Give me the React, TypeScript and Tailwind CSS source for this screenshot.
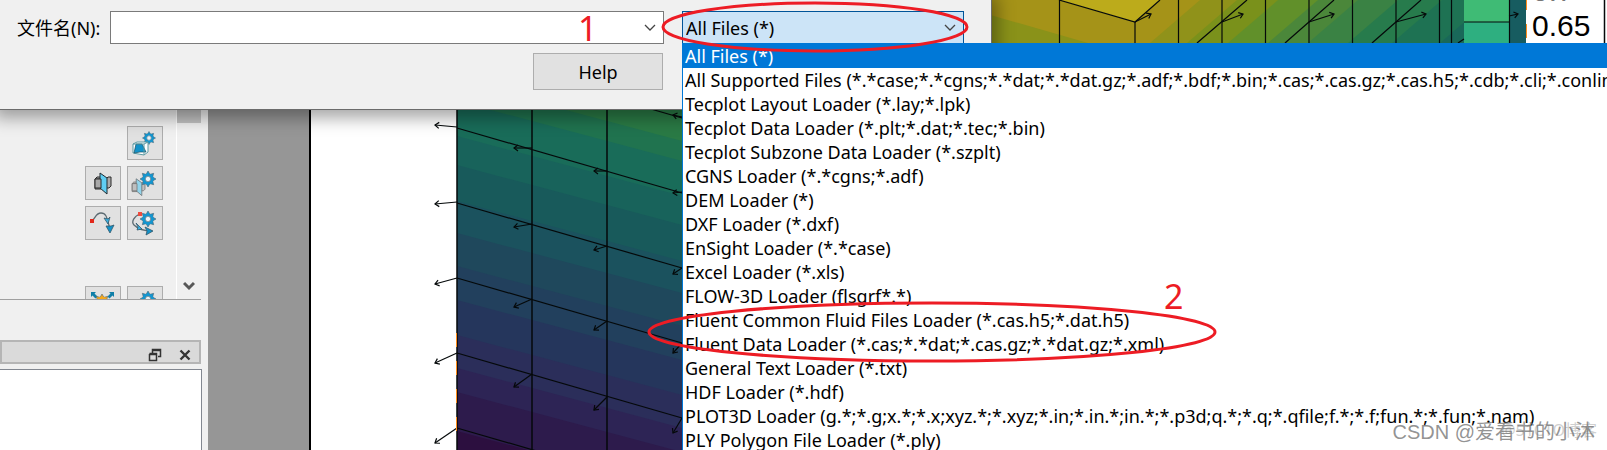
import { useState } from 'react';

const FILTERS = [
  'All Files (*)',
  'All Supported Files (*.*case;*.*cgns;*.*dat;*.*dat.gz;*.adf;*.bdf;*.bin;*.cas;*.cas.gz;*.cas.h5;*.cdb;*.cli;*.conlim;*.dat;*.dat.gz)',
  'Tecplot Layout Loader (*.lay;*.lpk)',
  'Tecplot Data Loader (*.plt;*.dat;*.tec;*.bin)',
  'Tecplot Subzone Data Loader (*.szplt)',
  'CGNS Loader (*.*cgns;*.adf)',
  'DEM Loader (*)',
  'DXF Loader (*.dxf)',
  'EnSight Loader (*.*case)',
  'Excel Loader (*.xls)',
  'FLOW-3D Loader (flsgrf*.*)',
  'Fluent Common Fluid Files Loader (*.cas.h5;*.dat.h5)',
  'Fluent Data Loader (*.cas;*.*dat;*.cas.gz;*.*dat.gz;*.xml)',
  'General Text Loader (*.txt)',
  'HDF Loader (*.hdf)',
  'PLOT3D Loader (g.*;*.g;x.*;*.x;xyz.*;*.xyz;*.in;*.in.*;in.*;*.p3d;q.*;*.q;*.qfile;f.*;*.f;fun.*;*.fun;*.nam)',
  'PLY Polygon File Loader (*.ply)',
];

// contour bands of the front face: y of the upper edge at x=457, colour
const FRONT_BANDS: [number, string][] = [
  [81, '#20734f'],
  [101, '#196c59'],
  [136, '#18635b'],
  [165, '#185a5b'],
  [201, '#1b525e'],
  [233, '#1f485c'],
  [266, '#22405d'],
  [300, '#25365c'],
  [335, '#2b2e5a'],
  [368, '#2d2455'],
  [392, '#2d1b4c'],
  [431, '#2c0f3f'],
];

// contour bands of the side face: x of the left edge at y=43, colour
const SIDE_BANDS: [number, string][] = [
  [1150, '#90921a'],
  [1187, '#7a911b'],
  [1228, '#61902a'],
  [1268, '#4b873a'],
  [1308, '#3a8244'],
  [1348, '#277b4c'],
  [1392, '#1e7253'],
  [1440, '#196859'],
];

function Gear({ x, y, s = 1, color = '#1496d0' }: { x: number; y: number; s?: number; color?: string }) {
  return (
    <g transform={`translate(${x} ${y}) scale(${s})`}>
      {[0, 45, 90, 135, 180, 225, 270, 315].map((a) => (
        <path key={a} d="M-2 -4.5L0 -8L2 -4.5Z" fill={color} stroke="#4d6470" strokeWidth=".6" transform={`rotate(${a})`} />
      ))}
      <circle r="4.2" fill="#e9f3f7" stroke={color} strokeWidth="2.6" />
      <circle r="2.7" fill="none" stroke="#4d6470" strokeWidth=".6" />
    </g>
  );
}

function SliceShape() {
  return (
    <g>
      <path d="M9 12l2-2h6v9l-2 3H9zM20 12l2-2h3v9l-2 2h-3z" fill="#a9a9a9" stroke="#2b2b2b" />
      <path d="M9 12h6v10M15 12l2-2" fill="none" stroke="#2b2b2b" />
      <path d="M14 6l7 5v16l-7-6z" fill="#5fcdf2" stroke="#1f2a30" />
      <path d="M9 12h6v9H9z" fill="#a9a9a9" stroke="#2b2b2b" />
    </g>
  );
}

function ToolIcon({ name }: { name: string }) {
  return (
    <svg width="34" height="32" viewBox="0 0 34 32" aria-hidden="true">
      {name === 'isoSettings' && (
        <g>
          <Gear x={21} y={11} s={0.82} />
          <path d="M5 17l4-2h11v10l-4 3-11-2z" fill="#fff" stroke="#5d9aa3" />
          <path d="M8 17h6l4 8h-6l-6 1z" fill="#1292c9" stroke="#134d63" strokeWidth=".7" />
          <path d="M5 17h11v11M16 17l4-2" fill="none" stroke="#5d9aa3" />
        </g>
      )}
      {name === 'slice' && <SliceShape />}
      {name === 'sliceSettings' && (
        <g>
          <g opacity=".6" transform="translate(-3 7) scale(.8)">
            <SliceShape />
          </g>
          <Gear x={20} y={12} />
        </g>
      )}
      {name === 'stream' && (
        <g>
          <path d="M6 14C10 10 10 6 15 6c6 0 6 6 9 16" fill="none" stroke="#5c6b72" strokeWidth="1.3" />
          <rect x="4" y="12" width="4" height="4" fill="#e2281b" />
          <path d="M18 11l4 6 2-7-2 2z" fill="#39b0e0" stroke="#35586a" strokeWidth=".8" />
          <path d="M20 19l4 7 4-8-3 1z" fill="#1292c9" stroke="#35586a" strokeWidth=".8" />
        </g>
      )}
      {name === 'streamSettings' && (
        <g>
          <path d="M12 7C6 9 3 15 6 18c4 4 10 6 18 6" fill="none" stroke="#5c6b72" strokeWidth="1.3" />
          <rect x="10" y="5" width="4" height="4" fill="#ee4b3e" />
          <path d="M8 16l6 6-5 1 1-3z" fill="#39b0e0" stroke="#35586a" strokeWidth=".8" />
          <path d="M17 20l8 4-7 4 1-4z" fill="#1292c9" stroke="#35586a" strokeWidth=".8" />
          <Gear x={20} y={12} />
        </g>
      )}
      {name === 'light' && (
        <g>
          <path d="M5 5h5l-1.500 1.500 3 3-2 2-3-3L5 10zM28 5h-5l1.500 1.500-3 3 2 2 3-3L28 10z" fill="#0f7fa8" />
          <Gear x={16} y={15} color="#f5a81c" />
        </g>
      )}
      {name === 'lightSettings' && <Gear x={20} y={12} />}
    </svg>
  );
}

function ToolButton({ name, label }: { name: string; label: string }) {
  return (
    <button type="button" aria-label={label} className="h-[34px] w-9 overflow-hidden border border-[#adadad] bg-[#e1e1e1]">
      <ToolIcon name={name} />
    </button>
  );
}

function Arrow({ x1, y1, x2, y2 }: { x1: number; y1: number; x2: number; y2: number }) {
  const angle = (Math.atan2(y2 - y1, x2 - x1) * 180) / Math.PI;
  return (
    <g>
      <path d={`M${x1} ${y1}L${x2} ${y2}`} />
      <path d="M-4 -3L0 0L-4 3" transform={`translate(${x2} ${y2}) rotate(${angle})`} />
    </g>
  );
}

function Plot() {
  return (
    <svg width="1296" height="450" viewBox="311 0 1296 450" className="block max-w-none" aria-label="Contour plot">
      <defs>
        <clipPath id="front">
          <path d="M457 0H1059L1135 22V450H457z" />
        </clipPath>
        <clipPath id="side">
          <path d="M1135 22L1160 0H1526V50H1135z" />
        </clipPath>
      </defs>

      <g clipPath="url(#front)">
        <rect x="457" y="0" width="700" height="450" fill="#2a7a45" />
        {FRONT_BANDS.map(([y, color]) => (
          <path key={color} d={`M457 ${y}L757 ${y + 80}V700H457z`} fill={color} />
        ))}
        <path d="M980 0H1140V50H980z" fill="#a59318" />
        <path d="M980 12L1088 43V50H980z" fill="#8a9219" />
      </g>
      <path d="M1059 0L1135 22L1160 0z" fill="#bcab1b" />
      <g clipPath="url(#side)">
        <rect x="1135" y="0" width="391" height="50" fill="#a59318" />
        {SIDE_BANDS.map(([x, color]) => (
          <path key={color} d={`M${x} 43L${x + 50} 0H1526V50H${x}z`} fill={color} />
        ))}
        <rect x="1509" y="0" width="17" height="50" fill="#175c60" />
      </g>
      <rect x="1464" y="0" width="45" height="22" fill="#3fbb75" />
      <rect x="1464" y="22" width="45" height="22" fill="#2eaf80" />

      <g fill="none" stroke="#05090a" strokeWidth="1.200">
        <path d="M457 100V450M532 100V450M607 100V450" strokeWidth="1.500" />
        {[53, 128, 203, 278, 353, 428].map((y) => (
          <path key={y} d={`M457 ${y}L682 ${y + 65}`} />
        ))}
        <Arrow x1={457} y1={127} x2={435} y2={125} />
        <Arrow x1={532} y1={148} x2={514} y2={148} />
        <Arrow x1={607} y1={171} x2={594} y2={171} />
        <Arrow x1={682} y1={192} x2={673} y2={193} />
        <Arrow x1={682} y1={117} x2={673} y2={115} />
        <Arrow x1={457} y1={202} x2={435} y2={204} />
        <Arrow x1={532} y1={224} x2={514} y2={227} />
        <Arrow x1={607} y1={246} x2={594} y2={250} />
        <Arrow x1={682} y1={268} x2={673} y2={274} />
        <Arrow x1={457} y1={278} x2={435} y2={284} />
        <Arrow x1={532} y1={299} x2={514} y2={307} />
        <Arrow x1={607} y1={321} x2={594} y2={330} />
        <Arrow x1={682} y1={343} x2={673} y2={353} />
        <Arrow x1={457} y1={353} x2={435} y2={363} />
        <Arrow x1={532} y1={374} x2={514} y2={387} />
        <Arrow x1={607} y1={397} x2={594} y2={410} />
        <Arrow x1={682} y1={418} x2={673} y2={433} />
        <Arrow x1={457} y1={428} x2={435} y2={443} />
        <path d="M1059.500 0V44M1135 22V44M1178.500 0V44M1222 0V44M1265.500 0V44M1309 0V44M1352.500 0V44M1396 0V44M1439.500 0V44M1451.500 0V44M1464 22H1509M1509.500 0V44" />
        <path d="M1059 0L1135 22L1160 0M1197 43L1247 0M1285 43L1334 0M1372 43L1421 0M1458 43L1464 39" />
        <Arrow x1={1135} y1={22} x2={1151} y2={14} />
        <Arrow x1={1222} y1={22} x2={1243} y2={14} />
        <Arrow x1={1309} y1={22} x2={1334} y2={14} />
        <Arrow x1={1396} y1={22} x2={1426} y2={14} />
        <Arrow x1={1509} y1={16} x2={1518} y2={14} />
        <path d="M1604.500 0V44" strokeWidth="1.500" />
      </g>
      <path d="M456.500 333V440M1526.500 0V10M1526.500 24V40" fill="none" stroke="#ff8c1a" strokeDasharray="14 14" />
      <text x="1532" y="36" fontSize="30" fontFamily="Liberation Sans, sans-serif">0.65</text>
      <text x="1532" y="1" fontSize="30" fill="#777" fontFamily="Liberation Sans, sans-serif">0.7</text>
    </svg>
  );
}

function Sidebar() {
  return (
    <aside className="flex w-[208px] shrink-0 flex-col bg-[#f0f0f0]">
      <div className="mr-[7px] flex h-[300px] shrink-0 overflow-hidden border-b border-[#a0a0a0]">
        <div className="flex flex-1 justify-end overflow-hidden border-r border-white pr-[13px] pt-[126px]">
          <div className="grid auto-rows-[34px] grid-cols-[36px_36px] gap-1.5">
            <span />
            <ToolButton name="isoSettings" label="Iso-surface settings" />
            <ToolButton name="slice" label="Slice" />
            <ToolButton name="sliceSettings" label="Slice settings" />
            <ToolButton name="stream" label="Streamtrace" />
            <ToolButton name="streamSettings" label="Streamtrace settings" />
            <span className="col-span-2" />
            <ToolButton name="light" label="Lighting" />
            <ToolButton name="lightSettings" label="Lighting settings" />
          </div>
        </div>
        <div className="flex w-6 flex-col items-center justify-between">
          <div className="h-[123px] w-full bg-[#c1c1c1]" />
          <button type="button" aria-label="Scroll down" className="mb-1.5">
            <svg width="12" height="12" viewBox="0 0 12 12">
              <path d="M1 2L6 7L11 2" fill="none" stroke="#585858" strokeWidth="3" />
            </svg>
          </button>
        </div>
      </div>

      <div className="mr-[7px] mt-10 flex h-6 shrink-0 items-center justify-end gap-[17px] border-2 border-[#b5b5b5] bg-[#dadada] pr-2 pt-1.5">
        <button type="button" aria-label="Float">
          <svg width="14" height="14" viewBox="0 0 14 14" fill="none" stroke="#333" className="block">
            <path d="M4.500 5V1.500H12.500V8.500H10M4 2.500H13" strokeWidth="1.500" />
            <path d="M1.500 6V12.500H8.500V5.500H1.500M1 6.500H9" strokeWidth="1.500" />
          </svg>
        </button>
        <button type="button" aria-label="Close">
          <svg width="12" height="12" viewBox="0 0 12 12" fill="none" stroke="#333" className="block">
            <path d="M1.500 1.500L10.500 10.500M10.500 1.500L1.500 10.500" strokeWidth="2.400" />
          </svg>
        </button>
      </div>
      <div className="mr-1.5 mt-[5px] flex-1 border-r border-t border-[#828790] bg-white" />
    </aside>
  );
}

function Chevron() {
  return (
    <svg width="12" height="8" viewBox="0 0 12 8" fill="none" stroke="#444" aria-hidden="true">
      <path d="M1 1L6 6L11 1" strokeWidth="1.300" />
    </svg>
  );
}

export default function App() {
  const [fileName, setFileName] = useState('');
  const [filter, setFilter] = useState(FILTERS[0]);

  return (
    <div className="relative h-screen overflow-hidden bg-white font-['Noto_Sans','Noto_Sans_CJK_SC',sans-serif] text-lg leading-6 text-black">
      <main className="flex h-full">
        <Sidebar />
        <div className="w-[103px] shrink-0 border-r-2 border-black bg-[#969696]" />
        <div className="min-w-0 flex-1 overflow-hidden">
          <Plot />
        </div>
      </main>

      {/* file dialog */}
      <form
        onSubmit={(e) => e.preventDefault()}
        className="absolute left-0 top-0 flex h-[110px] w-[992px] items-start border-b border-r border-[#6b6b6b] bg-[#f0f0f0] pl-[17px] pt-[11px] shadow-[0_2px_16px_6px_rgba(0,0,0,0.35)]"
      >
        <div className="flex w-[647px] flex-col items-end gap-[9px]">
          <div className="flex w-full items-center">
            <label htmlFor="file-name" className="w-[93px] shrink-0 whitespace-nowrap">
              文件名(N):
            </label>
            <div className="flex h-[33px] flex-1 items-center border border-[#7a7a7a] bg-white pr-[7px]">
              <input
                id="file-name"
                type="text"
                value={fileName}
                onChange={(e) => setFileName(e.target.value)}
                className="h-full min-w-0 flex-1 px-1 outline-none"
              />
              <button type="button" aria-label="Recent files">
                <Chevron />
              </button>
            </div>
          </div>
          <button type="button" className="mr-px h-[37px] w-[130px] border border-[#adadad] bg-[#e1e1e1]">
            Help
          </button>
        </div>
        <div className="ml-[18px] flex h-[33px] w-[282px] items-center border border-[#005499] bg-[#cce4f7] pr-[7px]">
          <select
            aria-label="File type"
            value={filter}
            onChange={(e) => setFilter(e.target.value)}
            className="h-full min-w-0 flex-1 appearance-none pl-[3px] outline-none"
          >
            {FILTERS.map((f) => (
              <option key={f}>{f}</option>
            ))}
          </select>
          <Chevron />
        </div>
      </form>

      {/* opened file type list */}
      <ul role="listbox" aria-label="File types" className="absolute bottom-0 left-[682px] right-0 top-[43px] overflow-hidden border-l border-t border-[#0078d7] bg-white">
        {FILTERS.map((f) => (
          <li
            key={f}
            role="option"
            aria-selected={f === filter}
            onClick={() => setFilter(f)}
            className="h-6 whitespace-nowrap pl-0.5 aria-selected:bg-[#0078d7] aria-selected:text-white"
          >
            {f}
          </li>
        ))}
      </ul>

      {/* red marks */}
      <svg className="pointer-events-none absolute left-0 top-0" width="1300" height="450" fill="none" stroke="#ed1c24" strokeWidth="3">
        <ellipse cx="815" cy="27" rx="152" ry="24" />
        <ellipse cx="932" cy="332" rx="283" ry="29" />
      </svg>
      <span className="absolute left-[578px] top-[10px] text-[34px] leading-9 text-[#ed1c24]">1</span>
      <span className="absolute left-[1164px] top-[278px] text-[34px] leading-9 text-[#ed1c24]">2</span>

      <span className="absolute bottom-2 right-2.5 whitespace-nowrap text-base text-[#bbbbbb]/70">@51CTO博客</span>
      <span className="absolute bottom-1 right-3 whitespace-nowrap font-['Liberation_Sans','Noto_Sans_CJK_SC',sans-serif] text-xl text-[#777777]/80">
        CSDN @爱看书的小沐
      </span>
    </div>
  );
}
